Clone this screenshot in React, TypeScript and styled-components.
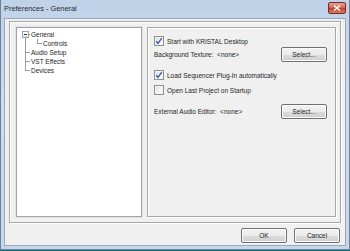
import React from "react";
import styled, { createGlobalStyle } from "styled-components";

const GlobalStyle = createGlobalStyle`
  html, body {
    margin: 0;
    padding: 0;
    background: #1b6a78;
  }
  * {
    box-sizing: border-box;
  }
`;

const Window = styled.div`
  width: 350px;
  height: 250px;
  display: flex;
  flex-direction: column;
  padding: 0 3px 3px 3px;
  background: linear-gradient(to bottom, #c0d2e8 0%, #cddcee 40%, #c6d7ea 100%);
  border: 1px solid #6f8299;
  border-top: none;
  font-family: "Liberation Sans", Arial, sans-serif;
  color: #1e1e1e;
`;

const TitleBar = styled.div`
  height: 18px;
  display: flex;
  align-items: center;
  justify-content: space-between;
  padding: 0 0 1px 0;
`;

const Title = styled.span`
  font-size: 7.4px;
  color: #1f2a3a;
`;

const CloseButton = styled.div`
  width: 18px;
  height: 12px;
  margin-right: 0;
  margin-top: -1px;
  border-radius: 2px;
  border: 1px solid #7a2a22;
  background: linear-gradient(to bottom, #e8a093 0%, #d5675a 45%, #c44333 55%, #d77a64 100%);
  display: flex;
  align-items: center;
  justify-content: center;
`;

const Body = styled.div`
  flex: 1;
  display: flex;
  flex-direction: column;
  background: #f0f0f0;
  border: 1px solid #98a9bf;
  padding: 2px 4px 0 4px;
`;

const Frame = styled.div`
  height: 202px;
  display: flex;
  gap: 5px;
  padding: 5px 4px 5px 6px;
  border: 1px solid #a7a7a7;
  box-shadow: inset 1px 1px 0 #ffffff, 1px 1px 0 #ffffff;
`;

const TreeBox = styled.div`
  width: 126px;
  background: #ffffff;
  border: 1px solid #a3a3a3;
  box-shadow: 0 0 0 1px #e4e4e4;
  padding: 2px 0 0 3px;
`;

const TreeRow = styled.div`
  display: flex;
  height: 9px;
  align-items: stretch;
`;

const Branch = styled.span<{ $up?: boolean; $down?: boolean; $tick?: boolean }>`
  position: relative;
  width: 10px;
  flex: none;
  &::before {
    content: "";
    position: absolute;
    left: 5px;
    top: ${(p) => (p.$up ? "0" : "50%")};
    bottom: ${(p) => (p.$down ? "0" : "50%")};
    border-left: 1px solid #9a9a9a;
    display: ${(p) => (p.$up || p.$down ? "block" : "none")};
  }
  &::after {
    content: "";
    position: absolute;
    left: 5px;
    right: 0;
    top: 4px;
    border-top: 1px solid #9a9a9a;
    display: ${(p) => (p.$tick ? "block" : "none")};
  }
`;

const Expander = styled.span`
  position: absolute;
  left: 2px;
  top: 1px;
  width: 7px;
  height: 7px;
  border: 1px solid #9aa3ad;
  background: linear-gradient(to bottom, #ffffff, #e3e6ea);
  z-index: 1;
  &::after {
    content: "";
    position: absolute;
    left: 1px;
    right: 1px;
    top: 2px;
    border-top: 1px solid #3a3a3a;
  }
`;

const TreeLabel = styled.span`
  font-size: 6.5px;
  line-height: 9px;
  padding-left: 1px;
  white-space: nowrap;
`;

const Panel = styled.div`
  flex: 1;
  border: 1px solid #a7a7a7;
  box-shadow: inset 1px 1px 0 #ffffff, 1px 1px 0 #ffffff;
  padding: 8px 8px 0 6px;
  display: flex;
  flex-direction: column;
`;

const Row = styled.div<{ $gap?: number }>`
  display: flex;
  align-items: center;
  justify-content: space-between;
  margin-top: ${(p) => p.$gap ?? 0}px;
  min-height: 11px;
`;

const CheckRow = styled.label<{ $gap?: number }>`
  display: flex;
  align-items: center;
  gap: 3px;
  margin-top: ${(p) => p.$gap ?? 0}px;
`;

const Box = styled.span`
  width: 10px;
  height: 10px;
  flex: none;
  border: 1px solid #8e8f8f;
  background: linear-gradient(135deg, #dcdcdc 0%, #f4f4f4 60%, #ffffff 100%);
  box-shadow: inset 0 0 0 1px #f4f4f4;
  display: flex;
  align-items: center;
  justify-content: center;
`;

const Text = styled.span`
  font-size: 6.5px;
  line-height: 9px;
  white-space: nowrap;
`;

const Button = styled.div<{ $w?: number }>`
  width: ${(p) => p.$w ?? 46}px;
  height: 15px;
  border: 1px solid #707070;
  border-radius: 2px;
  background: linear-gradient(to bottom, #f2f2f2 0%, #ebebeb 50%, #dddddd 51%, #cfcfcf 100%);
  box-shadow: inset 0 0 0 1px #fbfbfb;
  font-size: 6.5px;
  display: flex;
  align-items: center;
  justify-content: center;
  color: #1e1e1e;
`;

const Footer = styled.div`
  flex: 1;
  display: flex;
  justify-content: flex-end;
  align-items: center;
  gap: 7px;
  padding: 2px 1px 0 0;
`;

const Check = ({ on }: { on?: boolean }) => (
  <Box>
    {on && (
      <svg width="8" height="8" viewBox="0 0 8 8">
        <path d="M1.2 4.2 L3 6.3 L6.8 1.2" fill="none" stroke="#3a5ba8" strokeWidth="1.4" />
      </svg>
    )}
  </Box>
);

export default function App() {
  return (
    <>
      <GlobalStyle />
      <Window>
        <TitleBar>
          <Title>Preferences - General</Title>
          <CloseButton>
            <svg width="8" height="6" viewBox="0 0 8 6">
              <path d="M1 0.5 L7 5.5 M7 0.5 L1 5.5" stroke="#ffffff" strokeWidth="1.5" />
            </svg>
          </CloseButton>
        </TitleBar>
        <Body>
          <Frame>
            <TreeBox>
              <TreeRow>
                <Branch $down $tick>
                  <Expander />
                </Branch>
                <TreeLabel>General</TreeLabel>
              </TreeRow>
              <TreeRow>
                <Branch $up $down />
                <Branch $up $tick style={{ marginLeft: 2 }} />
                <TreeLabel>Controls</TreeLabel>
              </TreeRow>
              <TreeRow>
                <Branch $up $down $tick />
                <TreeLabel>Audio Setup</TreeLabel>
              </TreeRow>
              <TreeRow>
                <Branch $up $down $tick />
                <TreeLabel>VST Effects</TreeLabel>
              </TreeRow>
              <TreeRow>
                <Branch $up $tick />
                <TreeLabel>Devices</TreeLabel>
              </TreeRow>
            </TreeBox>
            <Panel>
              <CheckRow>
                <Check on />
                <Text>Start with KRISTAL Desktop</Text>
              </CheckRow>
              <Row $gap={1}>
                <Text>Background Texture:&nbsp; &lt;none&gt;</Text>
                <Button>Select...</Button>
              </Row>
              <CheckRow $gap={8}>
                <Check on />
                <Text>Load Sequencer Plug-In automatically</Text>
              </CheckRow>
              <CheckRow $gap={5}>
                <Check />
                <Text>Open Last Project on Startup</Text>
              </CheckRow>
              <Row $gap={9}>
                <Text>External Audio Editor:&nbsp; &lt;none&gt;</Text>
                <Button>Select...</Button>
              </Row>
            </Panel>
          </Frame>
          <Footer>
            <Button>OK</Button>
            <Button>Cancel</Button>
          </Footer>
        </Body>
      </Window>
    </>
  );
}
